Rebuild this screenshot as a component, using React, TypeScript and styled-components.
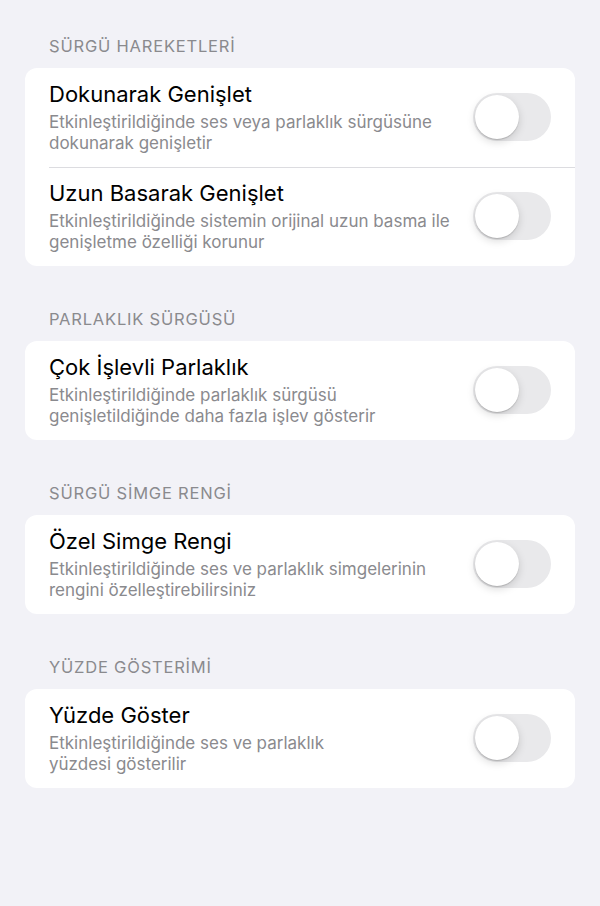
import React, { useState } from "react";
import styled, { createGlobalStyle } from "styled-components";

const GlobalStyle = createGlobalStyle`
  html, body {
    margin: 0;
    padding: 0;
    background: #f2f2f7;
  }
  body {
    font-family: Inter, "Noto Sans", "Liberation Sans", sans-serif;
    -webkit-font-smoothing: antialiased;
  }
`;

type Item = {
  title: string;
  lines: string[];
};

type Group = {
  header: string;
  items: Item[];
};

const groups: Group[] = [
  {
    header: "SÜRGÜ HAREKETLERİ",
    items: [
      {
        title: "Dokunarak Genişlet",
        lines: [
          "Etkinleştirildiğinde ses veya parlaklık sürgüsüne",
          "dokunarak genişletir",
        ],
      },
      {
        title: "Uzun Basarak Genişlet",
        lines: [
          "Etkinleştirildiğinde sistemin orijinal uzun basma ile",
          "genişletme özelliği korunur",
        ],
      },
    ],
  },
  {
    header: "PARLAKLIK SÜRGÜSÜ",
    items: [
      {
        title: "Çok İşlevli Parlaklık",
        lines: [
          "Etkinleştirildiğinde parlaklık sürgüsü",
          "genişletildiğinde daha fazla işlev gösterir",
        ],
      },
    ],
  },
  {
    header: "SÜRGÜ SİMGE RENGİ",
    items: [
      {
        title: "Özel Simge Rengi",
        lines: [
          "Etkinleştirildiğinde ses ve parlaklık simgelerinin",
          "rengini özelleştirebilirsiniz",
        ],
      },
    ],
  },
  {
    header: "YÜZDE GÖSTERİMİ",
    items: [
      {
        title: "Yüzde Göster",
        lines: ["Etkinleştirildiğinde ses ve parlaklık", "yüzdesi gösterilir"],
      },
    ],
  },
];

function Toggle() {
  const [on, setOn] = useState(false);
  return (
    <Track $on={on} onClick={() => setOn(!on)}>
      <Knob $on={on} />
    </Track>
  );
}

export default function App() {
  return (
    <Page>
      <GlobalStyle />
      {groups.map((g) => (
        <Section key={g.header}>
          <Header>{g.header}</Header>
          <Card>
            {g.items.map((item, i) => (
              <Row key={item.title} $divider={i > 0}>
                <Texts>
                  <Title>{item.title}</Title>
                  <Subtitle>
                    {item.lines.map((l) => (
                      <span key={l}>{l}</span>
                    ))}
                  </Subtitle>
                </Texts>
                <Toggle />
              </Row>
            ))}
          </Card>
        </Section>
      ))}
    </Page>
  );
}

const Page = styled.div`
  min-height: 906px;
  box-sizing: border-box;
  padding: 36px 25px 0;
  display: flex;
  flex-direction: column;
  gap: 43px;
`;

const Section = styled.section`
  display: flex;
  flex-direction: column;
`;

const Header = styled.div`
  padding-left: 24px;
  margin-bottom: 12px;
  font-size: 16.5px;
  line-height: 20px;
  color: #8a8a8e;
  letter-spacing: 0.8px;
`;

const Card = styled.div`
  background: #ffffff;
  border-radius: 12px;
  overflow: hidden;
`;

const Row = styled.div<{ $divider: boolean }>`
  position: relative;
  display: flex;
  align-items: center;
  justify-content: space-between;
  padding: 11px 24px 13px;
  min-height: 99px;
  box-sizing: border-box;

  &::before {
    content: "";
    display: ${(p) => (p.$divider ? "block" : "none")};
    position: absolute;
    top: 0;
    left: 24px;
    right: 0;
    height: 1px;
    background: #dcdce0;
  }
`;

const Texts = styled.div`
  display: flex;
  flex-direction: column;
`;

const Title = styled.div`
  font-size: 22px;
  line-height: 28px;
  color: #000000;
`;

const Subtitle = styled.div`
  margin-top: 4px;
  display: flex;
  flex-direction: column;
  font-size: 17px;
  line-height: 21px;
  color: #8a8a8e;
  white-space: nowrap;
`;

const Track = styled.div<{ $on: boolean }>`
  flex: none;
  width: 78px;
  height: 48px;
  border-radius: 24px;
  background: ${(p) => (p.$on ? "#34c759" : "#e9e9eb")};
  position: relative;
  cursor: pointer;
`;

const Knob = styled.div<{ $on: boolean }>`
  position: absolute;
  top: 2px;
  left: ${(p) => (p.$on ? "32px" : "2px")};
  width: 44px;
  height: 44px;
  border-radius: 50%;
  background: #ffffff;
  box-shadow: 0 3px 8px rgba(0, 0, 0, 0.15), 0 1px 1px rgba(0, 0, 0, 0.16);
`;
